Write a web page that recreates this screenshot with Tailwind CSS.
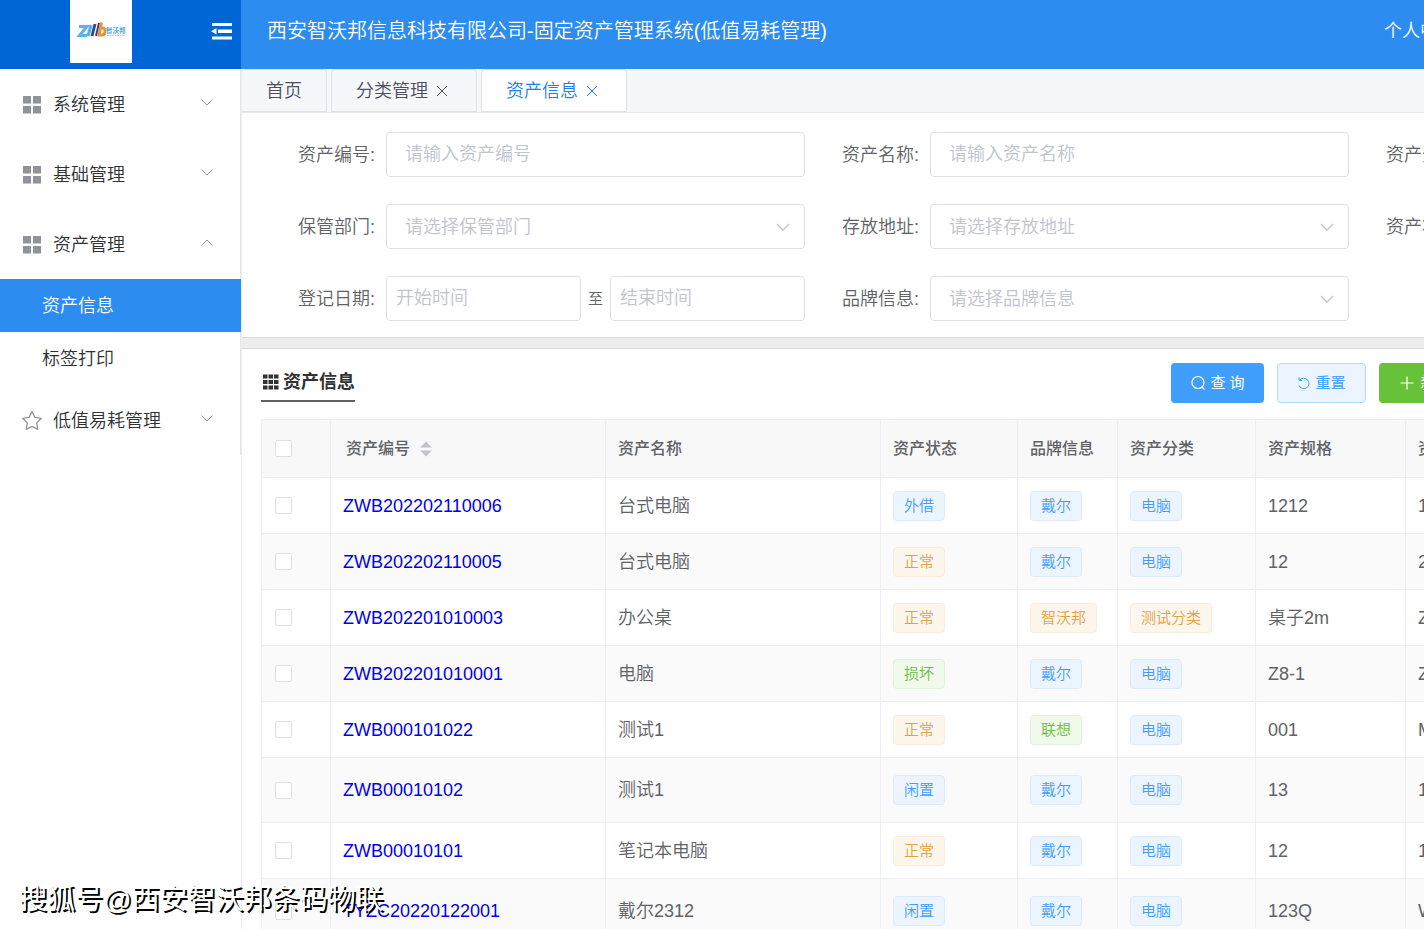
<!DOCTYPE html>
<html lang="zh-CN">
<head>
  <meta charset="UTF-8">
  <meta name="viewport" content="width=device-width, initial-scale=1.0">
  <title>固定资产管理系统</title>
  <script src="https://cdn.jsdelivr.net/npm/@tailwindcss/browser@4"></script>
</head>
<body class="h-screen overflow-hidden flex flex-col bg-white font-['Liberation_Sans','Noto_Sans_CJK_SC',sans-serif] text-lg font-[350] text-[#606266]">

  <header class="flex shrink-0 h-[69px] bg-[#2d8cf0] text-white">
    <div class="relative w-[241px] shrink-0 bg-[#0066d6] flex items-start justify-center pr-10">
      <div class="w-[62px] h-[63px] bg-white">
        <svg class="w-full h-full" viewBox="0 0 62 63" role="img" aria-label="智沃邦">
          <g fill="none" stroke-width="3">
            <path d="M9 26.500h8L9.500 35.500h7.500" stroke="#5ab4e6" stroke-width="3"/>
            <path d="M21 25l-3 11" stroke="#4db0e8"/>
            <path d="M25 24l-3 12" stroke="#2a4d9b"/>
            <path d="M29 23l-3 13" stroke="#473a7c" stroke-width="2"/>
            <path d="M31.500 22.500l-2.500 12.500h3c3.500 0 4.500-7 .5-7h-2" stroke="#e0963c" stroke-width="3"/>
          </g>
          <text x="36" y="33" font-size="6.500" font-weight="700" fill="#4aa5e0">智沃邦</text>
          <path d="M37 35.500h18" stroke="#ecbf8e" stroke-dasharray="2 .5"/>
        </svg>
      </div>
      <button type="button" aria-label="收起菜单" class="absolute right-[9px] top-[22px]">
        <svg class="w-[21px] h-[19px]" viewBox="0 0 21 19" fill="#fff"><path d="M1 1h20v3H1zM7 7.500h14v3.500H7zM1 14.500h20v3H1zM0 9.200l5.500-3.200v6.500z"/></svg>
      </button>
    </div>
    <div class="flex-1 flex justify-between overflow-hidden pl-[26px] leading-[63px]">
      <h1 class="text-xl leading-[63px] whitespace-nowrap">西安智沃邦信息科技有限公司-固定资产管理系统(低值易耗管理)</h1>
      <a href="#" class="w-10 shrink-0 whitespace-nowrap">个人中心</a>
    </div>
  </header>

  <div class="flex flex-1 min-h-0">
    <aside class="w-[241px] shrink-0 text-[#303133]">
      <nav id="menu" class="border-r border-[#e6e6e6]"></nav>
    </aside>

    <main class="flex-1 min-w-0 overflow-hidden border-l border-[#ebeef5]">
      <div class="flex gap-1 h-11 bg-[#f5f7fa] border-b border-[#e4e7ed]" role="tablist">
        <button type="button" role="tab" class="h-[43px] px-6 border border-l-0 border-[#dfe1e6] rounded-t text-[#495060]">首页</button>
        <button type="button" role="tab" class="h-[43px] pl-6 pr-7 border border-[#dfe1e6] rounded-t text-[#495060] flex items-center gap-2">分类管理
          <svg class="w-3 h-3" viewBox="0 0 12 12" fill="none" stroke="currentColor"><path d="M1 1l10 10M11 1L1 11"/></svg>
        </button>
        <button type="button" role="tab" aria-selected="true" class="h-[43px] pl-6 pr-7 border border-[#dfe1e6] rounded-t bg-white text-[#1a7ff0] flex items-center gap-2">资产信息
          <svg class="w-3 h-3" viewBox="0 0 12 12" fill="none" stroke="currentColor"><path d="M1 1l10 10M11 1L1 11"/></svg>
        </button>
      </div>

      <form class="grid grid-cols-[repeat(3,507px)] gap-x-[37px] gap-y-[27px] pl-14 pt-[19px] pb-4">
        <div class="flex items-center">
          <label for="code" class="w-[88px] shrink-0">资产编号:</label>
          <input id="code" type="text" placeholder="请输入资产编号" class="flex-1 min-w-0 h-[45px] px-[18px] border border-[#dcdfe6] rounded placeholder:text-[#c0c4cc]">
        </div>
        <div class="flex items-center">
          <label for="name" class="w-[88px] shrink-0">资产名称:</label>
          <input id="name" type="text" placeholder="请输入资产名称" class="flex-1 min-w-0 h-[45px] px-[18px] border border-[#dcdfe6] rounded placeholder:text-[#c0c4cc]">
        </div>
        <div class="flex items-center">
          <label for="type" class="w-[88px] shrink-0">资产分类:</label>
          <select id="type" class="flex-1 min-w-0 h-[45px] px-[18px] border border-[#dcdfe6] rounded appearance-none text-[#c0c4cc]"><option>请选择资产分类</option></select>
        </div>
        <div class="flex items-center relative">
          <label for="dept" class="w-[88px] shrink-0">保管部门:</label>
          <select id="dept" class="flex-1 min-w-0 h-[45px] px-[18px] border border-[#dcdfe6] rounded appearance-none text-[#c0c4cc]"><option>请选择保管部门</option></select>
          <svg class="absolute right-[15px] w-[14px] h-2 pointer-events-none" viewBox="0 0 14 8" fill="none" stroke="#c0c4cc" stroke-width="1.300"><path d="M1 1l6 6 6-6"/></svg>
        </div>
        <div class="flex items-center relative">
          <label for="place" class="w-[88px] shrink-0">存放地址:</label>
          <select id="place" class="flex-1 min-w-0 h-[45px] px-[18px] border border-[#dcdfe6] rounded appearance-none text-[#c0c4cc]"><option>请选择存放地址</option></select>
          <svg class="absolute right-[15px] w-[14px] h-2 pointer-events-none" viewBox="0 0 14 8" fill="none" stroke="#c0c4cc" stroke-width="1.300"><path d="M1 1l6 6 6-6"/></svg>
        </div>
        <div class="flex items-center">
          <label for="state" class="w-[88px] shrink-0">资产状态:</label>
          <select id="state" class="flex-1 min-w-0 h-[45px] px-[18px] border border-[#dcdfe6] rounded appearance-none text-[#c0c4cc]"><option>请选择资产状态</option></select>
        </div>
        <div class="flex items-center">
          <label for="start" class="w-[88px] shrink-0">登记日期:</label>
          <input id="start" type="text" placeholder="开始时间" class="flex-1 min-w-0 h-[45px] px-[9px] border border-[#dcdfe6] rounded placeholder:text-[#c0c4cc]">
          <label for="end" class="w-[29px] text-center text-[15px]">至</label>
          <input id="end" type="text" placeholder="结束时间" class="flex-1 min-w-0 h-[45px] px-[9px] border border-[#dcdfe6] rounded placeholder:text-[#c0c4cc]">
        </div>
        <div class="flex items-center relative">
          <label for="brand" class="w-[88px] shrink-0">品牌信息:</label>
          <select id="brand" class="flex-1 min-w-0 h-[45px] px-[18px] border border-[#dcdfe6] rounded appearance-none text-[#c0c4cc]"><option>请选择品牌信息</option></select>
          <svg class="absolute right-[15px] w-[14px] h-2 pointer-events-none" viewBox="0 0 14 8" fill="none" stroke="#c0c4cc" stroke-width="1.300"><path d="M1 1l6 6 6-6"/></svg>
        </div>
      </form>

      <div class="h-3 bg-[#ededed] border-y border-[#d9d9d9]"></div>

      <section class="pl-[19px] pt-[14px]">
        <div class="flex items-start h-14">
          <div class="basis-[910px] shrink-0">
            <h2 class="inline-flex items-center gap-1 h-[39px] pl-[2px] border-b-2 border-[#606266] font-bold text-[#303133]">
              <svg class="w-4 h-4" viewBox="0 0 16 16" fill="#303133"><path d="M0 .5h4.500v4H0zM5.500 .5H10v4H5.500zM11 .5h4.500v4H11zM0 6h4.500v4H0zM5.500 6H10v4H5.500zM11 6h4.500v4H11zM0 11.500h4.500v4H0zM5.500 11.500H10v4H5.500zM11 11.500h4.500v4H11z"/></svg>
              资产信息
            </h2>
          </div>
          <div class="flex gap-[13px] text-[15px] font-normal">
            <button type="button" class="shrink-0 w-[93px] h-10 rounded bg-[#409eff] text-white flex items-center justify-center gap-1">
              <svg class="w-4 h-4" viewBox="0 0 16 16" fill="none" stroke="currentColor" stroke-width="1.200"><circle cx="8" cy="7.500" r="6"/><path d="M12 12l2.500 2.500"/></svg>
              查 询
            </button>
            <button type="button" class="shrink-0 w-[89px] h-10 rounded border border-[#b3d8ff] bg-[#ecf5ff] text-[#409eff] flex items-center justify-center gap-1">
              <svg class="w-[14px] h-[14px]" viewBox="0 0 14 14" fill="none" stroke="currentColor"><path d="M2 1.500v3h3.500M2.500 4.500a5.200 5.200 0 1 1-.5 5"/></svg>
              重置
            </button>
            <button type="button" class="shrink-0 w-[93px] h-10 rounded bg-[#67c23a] text-white flex items-center justify-center gap-1">
              <svg class="w-4 h-4" viewBox="0 0 16 16" fill="none" stroke="currentColor" stroke-width="1.200"><path d="M7 1.500v13M.5 8h13"/></svg>
              新增
            </button>
          </div>
        </div>

        <table class="table-fixed w-[1419px] border-collapse text-left [&_td]:border [&_td]:border-[#ebeef5] [&_td]:px-3 [&_td]:py-0 [&_th]:border [&_th]:border-[#ebeef5] [&_th]:px-3 [&_th]:font-medium">
          <colgroup>
            <col class="w-[69px]"><col class="w-[275px]"><col class="w-[275px]"><col class="w-[137px]"><col class="w-[100px]"><col class="w-[138px]"><col class="w-[150px]"><col class="w-[275px]">
          </colgroup>
          <thead>
            <tr class="h-[58px] bg-[#f8f8f9] text-base">
              <th><input type="checkbox" aria-label="全选" class="block ml-px w-[17px] h-[17px] appearance-none bg-white border border-[#dcdfe6] rounded-xs"></th>
              <th>
                <div class="flex items-center gap-[10px] pl-[3px]">资产编号
                  <svg class="w-3 h-4" viewBox="0 0 12 16" fill="#c0c4cc"><path d="M6 .5l6 6H0zM6 15.500l6-6H0z"/></svg>
                </div>
              </th>
              <th>资产名称</th>
              <th>资产状态</th>
              <th>品牌信息</th>
              <th>资产分类</th>
              <th>资产规格</th>
              <th>资产型号</th>
            </tr>
          </thead>
          <tbody id="assetRows"></tbody>
        </table>
      </section>
    </main>
  </div>

  <div class="absolute left-[19px] bottom-[9px] text-[28px] leading-10 font-normal text-white whitespace-nowrap pointer-events-none [text-shadow:2px_2px_0_#000]">搜狐号@西安智沃邦条码物联</div>

  <script>
    const gridIcon = '<svg class="w-[18px] h-[18px]" viewBox="0 0 18 18" fill="#909399"><path d="M0 0h8v7.500H0zM10 0h8v7.500h-8zM0 10h8v7.500H0zM10 10h8v7.500h-8z"/></svg>';
    const starIcon = '<svg class="w-[18px] h-[18px] overflow-visible" viewBox="0 0 18 18" fill="none" stroke="#909399" stroke-width="1.300" stroke-linejoin="round"><path d="M9-.5l2.900 5.900 6.500.9-4.700 4.600 1.100 6.500L9 14.400l-5.800 3 1.100-6.500L-.4 6.300l6.500-.9z"/></svg>';

    const menu = [
      { title: '系统管理', icon: gridIcon },
      { title: '基础管理', icon: gridIcon },
      { title: '资产管理', icon: gridIcon, children: ['资产信息', '标签打印'] },
      { title: '低值易耗管理', icon: starIcon },
    ];

    document.getElementById('menu').innerHTML = menu.map(item => `
      <button type="button" class="flex items-center w-full h-[70px] pl-[23px] pr-[27px] pt-px gap-3">
        ${item.icon}
        <span class="flex-1 text-left">${item.title}</span>
        <svg class="w-3 h-[7px] mb-1" viewBox="0 0 12 7" fill="none" stroke="#909399"><path d="${item.children ? 'M.5 6.500L6 1l5.500 5.500' : 'M.5.5L6 6 11.500.5'}"/></svg>
      </button>
      ${(item.children || []).map((name, i) => `
        <a href="#" class="flex items-center h-[53px] pl-[42px] ${i === 0 ? 'bg-[#2d8cf0] text-white -mr-px' : ''}">${name}</a>`).join('')}
    `).join('');

    const tagColors = {
      blue: 'border-[#d9ecff] bg-[#ecf5ff] text-[#409eff]',
      orange: 'border-[#faecd8] bg-[#fdf6ec] text-[#e6a23c]',
      green: 'border-[#e1f3d8] bg-[#f0f9eb] text-[#67c23a]',
    };
    const tag = ([text, color]) => `<span class="flex items-center w-fit h-[30px] px-[10px] rounded border text-[15px] whitespace-nowrap ${tagColors[color]}">${text}</span>`;

    const pc = ['电脑', 'blue'];
    const dell = ['戴尔', 'blue'];
    const normal = ['正常', 'orange'];
    const idle = ['闲置', 'blue'];

    const assets = [
      { id: 'ZWB202202110006', name: '台式电脑', state: ['外借', 'blue'], brand: dell, type: pc, spec: '1212', model: '1212' },
      { id: 'ZWB202202110005', name: '台式电脑', state: normal, brand: dell, type: pc, spec: '12', model: '21' },
      { id: 'ZWB202201010003', name: '办公桌', state: normal, brand: ['智沃邦', 'orange'], type: ['测试分类', 'orange'], spec: '桌子2m', model: 'Z2' },
      { id: 'ZWB202201010001', name: '电脑', state: ['损坏', 'green'], brand: dell, type: pc, spec: 'Z8-1', model: 'Z8' },
      { id: 'ZWB000101022', name: '测试1', state: normal, brand: ['联想', 'green'], type: pc, spec: '001', model: 'M1' },
      { id: 'ZWB00010102', name: '测试1', state: idle, brand: dell, type: pc, spec: '13', model: '13', tall: true },
      { id: 'ZWB00010101', name: '笔记本电脑', state: normal, brand: dell, type: pc, spec: '12', model: '12' },
      { id: 'TYZC20220122001', name: '戴尔2312', state: idle, brand: dell, type: pc, spec: '123Q', model: 'W1', tall: true },
    ];

    document.getElementById('assetRows').innerHTML = assets.map(a => `
      <tr class="even:bg-[#fafafa] ${a.tall ? 'h-[65px]' : 'h-14'}">
        <td><input type="checkbox" aria-label="${a.id}" class="block ml-px w-[17px] h-[17px] appearance-none bg-white border border-[#dcdfe6] rounded-xs"></td>
        <td><a href="#" class="text-[#0000ee]">${a.id}</a></td>
        <td>${a.name}</td>
        <td>${tag(a.state)}</td>
        <td>${tag(a.brand)}</td>
        <td>${tag(a.type)}</td>
        <td>${a.spec}</td>
        <td>${a.model}</td>
      </tr>`).join('');
  </script>
</body>
</html>
